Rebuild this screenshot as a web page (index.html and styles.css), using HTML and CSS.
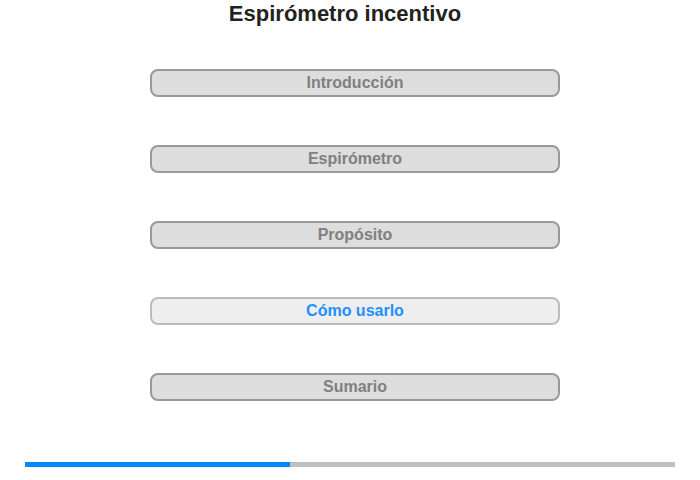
FILE: index.html
```html
<!DOCTYPE html>
<html lang="es">
<head>
<meta charset="utf-8">
<title>Espirómetro incentivo</title>
<link rel="stylesheet" href="styles.css">
</head>
<body>
<div class="page">
  <h1 class="title">Espirómetro incentivo</h1>
  <nav class="menu">
    <div class="item">Introducción</div>
    <div class="item">Espirómetro</div>
    <div class="item">Propósito</div>
    <div class="item active">Cómo usarlo</div>
    <div class="item">Sumario</div>
  </nav>
  <div class="progress"><div class="progress-fill" style="width:40.8%"></div></div>
</div>
</body>
</html>
```
FILE: styles.css
```css
html, body {
  margin: 0;
  padding: 0;
  background: #fff;
}
.page {
  width: 700px;
  height: 480px;
  font-family: "Liberation Sans", Arial, sans-serif;
  display: flex;
  flex-direction: column;
}
.title {
  margin: 0;
  padding-top: 0;
  height: 28px;
  line-height: 28px;
  font-size: 22px;
  font-weight: bold;
  color: #222;
  text-align: center;
  padding-right: 10px;
}
.menu {
  margin-top: 41px;
  display: flex;
  flex-direction: column;
  gap: 48px;
  align-items: flex-start;
  padding-left: 150px;
}
.item {
  box-sizing: border-box;
  width: 410px;
  height: 28px;
  border: 2px solid #999;
  border-radius: 8px;
  background: #dddddd;
  color: #808080;
  font-size: 16px;
  font-weight: bold;
  text-align: center;
  line-height: 24px;
}
.item.active {
  background: #eeeeee;
  border-color: #bbbbbb;
  color: #1e90ff;
}
.progress {
  margin: 61px 0 0 25px;
  width: 650px;
  height: 5px;
  background: #c0c0c0;
}
.progress-fill {
  height: 100%;
  background: #0088ff;
}
```
